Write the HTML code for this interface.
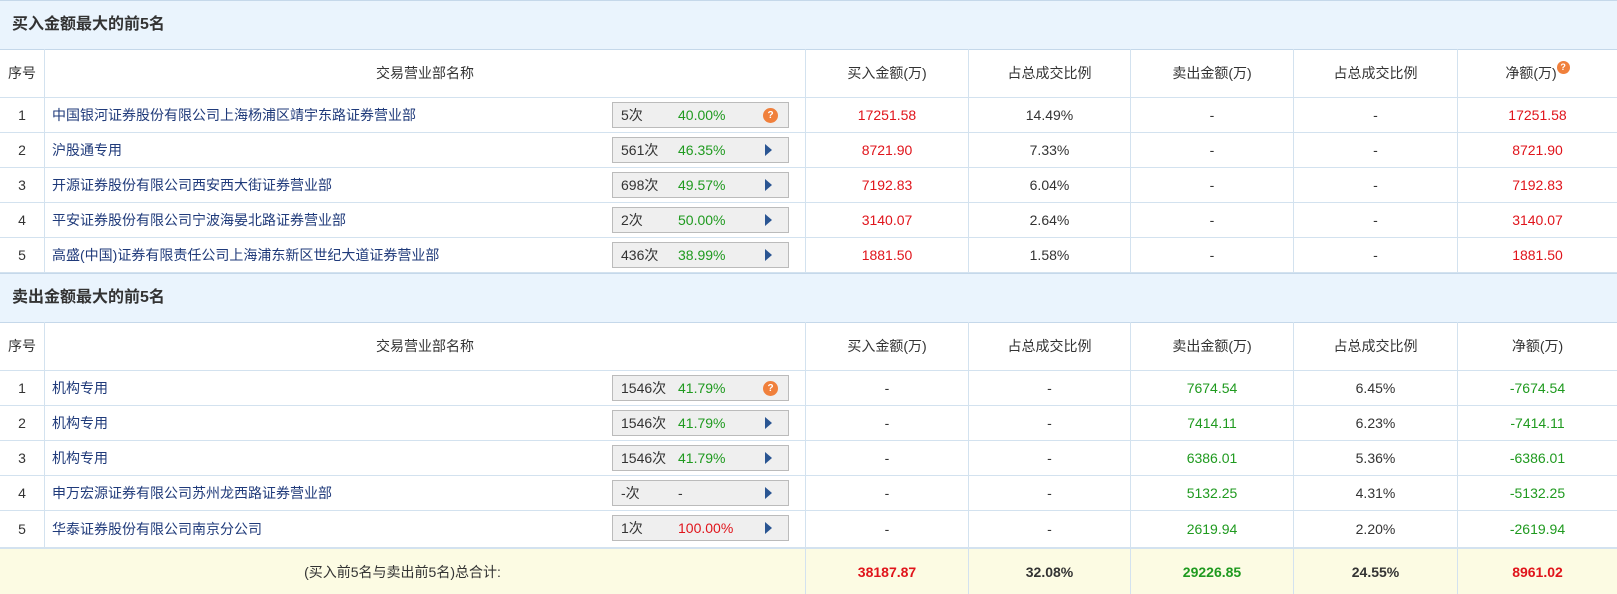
<!DOCTYPE html>
<html><head><meta charset="utf-8"><style>
*{margin:0;padding:0;box-sizing:border-box}
body{width:1617px;height:594px;background:#fff;font-family:"Liberation Sans","Noto Sans CJK SC",sans-serif;font-size:14px;color:#333;overflow:hidden;position:relative}
.t{position:absolute;left:0;width:1617px;background:#eaf4fd;border-top:1px solid #c5d8ea;border-bottom:1px solid #c5d8ea;font-size:16px;font-weight:bold;color:#333;padding-left:12px}
.row{position:absolute;left:0;width:1617px;height:35px;border-bottom:1px solid #d3e2ef}
.c{position:absolute;top:0;height:100%;display:flex;align-items:center;justify-content:center;border-left:1px solid #d3e2ef}
.hd{height:49px}
.n{justify-content:flex-start;padding-left:7px;color:#1f3a7a}
.btn{position:absolute;left:612px;top:4px;width:177px;height:26px;background:#efefef;border:1px solid #bbb;font-size:14px}
.btn .a,.btn .p{position:absolute;top:0;height:24px;line-height:24px;font-family:"Liberation Sans",sans-serif}
.btn .a{left:8px;color:#333}
.btn .a i{font-style:normal;font-family:"Noto Sans CJK SC",sans-serif;font-size:14px;line-height:24px;display:inline-block;vertical-align:top}
.btn .p{left:65px}
.btn .ar{position:absolute;left:152px;top:6px;width:0;height:0;border-top:6px solid transparent;border-bottom:6px solid transparent;border-left:7px solid #2a5592}
.btn .q{position:absolute;left:150px;top:5px;width:15px;height:15px;border-radius:50%;background:#f0803c;color:#fff;font-size:10px;text-align:center;line-height:15px;font-weight:bold}
.r{color:#e0141b}.g{color:#1f9a1f}
.tot{position:absolute;left:0;top:548px;width:1617px;height:46px;background:#fcfbe3;border-top:1px solid #d3e2ef}
.tot .c{font-weight:bold}
</style></head><body>

<div class="t" style="top:0;height:50px;line-height:48px">买入金额最大的前5名</div>
<div class="row hd" style="top:49px"><div class="c" style="left:0;width:44px;border-left:0">序号</div><div class="c" style="left:44px;width:761px">交易营业部名称</div><div class="c" style="left:805px;width:163px">买入金额(万)</div><div class="c" style="left:968px;width:162px">占总成交比例</div><div class="c" style="left:1130px;width:163px">卖出金额(万)</div><div class="c" style="left:1293px;width:164px">占总成交比例</div><div class="c" style="left:1457px;width:160px">净额(万)<span style="display:inline-block;width:13px;height:13px;border-radius:50%;background:#f0803c;color:#fff;font-size:9px;line-height:13px;text-align:center;margin-top:-12px;font-weight:bold">?</span></div></div>

<div class="row" style="top:98px"><div class="c" style="left:0;width:44px;border-left:0">1</div><div class="c n" style="left:44px;width:761px">中国银河证券股份有限公司上海杨浦区靖宇东路证券营业部</div><div class="btn"><span class="a">5<i>次</i></span><span class="p g">40.00%</span><span class="q">?</span></div><div class="c r" style="left:805px;width:163px">17251.58</div><div class="c" style="left:968px;width:162px">14.49%</div><div class="c" style="left:1130px;width:163px">-</div><div class="c" style="left:1293px;width:164px">-</div><div class="c r" style="left:1457px;width:160px">17251.58</div></div>
<div class="row" style="top:133px"><div class="c" style="left:0;width:44px;border-left:0">2</div><div class="c n" style="left:44px;width:761px">沪股通专用</div><div class="btn"><span class="a">561<i>次</i></span><span class="p g">46.35%</span><span class="ar"></span></div><div class="c r" style="left:805px;width:163px">8721.90</div><div class="c" style="left:968px;width:162px">7.33%</div><div class="c" style="left:1130px;width:163px">-</div><div class="c" style="left:1293px;width:164px">-</div><div class="c r" style="left:1457px;width:160px">8721.90</div></div>
<div class="row" style="top:168px"><div class="c" style="left:0;width:44px;border-left:0">3</div><div class="c n" style="left:44px;width:761px">开源证券股份有限公司西安西大街证券营业部</div><div class="btn"><span class="a">698<i>次</i></span><span class="p g">49.57%</span><span class="ar"></span></div><div class="c r" style="left:805px;width:163px">7192.83</div><div class="c" style="left:968px;width:162px">6.04%</div><div class="c" style="left:1130px;width:163px">-</div><div class="c" style="left:1293px;width:164px">-</div><div class="c r" style="left:1457px;width:160px">7192.83</div></div>
<div class="row" style="top:203px"><div class="c" style="left:0;width:44px;border-left:0">4</div><div class="c n" style="left:44px;width:761px">平安证券股份有限公司宁波海晏北路证券营业部</div><div class="btn"><span class="a">2<i>次</i></span><span class="p g">50.00%</span><span class="ar"></span></div><div class="c r" style="left:805px;width:163px">3140.07</div><div class="c" style="left:968px;width:162px">2.64%</div><div class="c" style="left:1130px;width:163px">-</div><div class="c" style="left:1293px;width:164px">-</div><div class="c r" style="left:1457px;width:160px">3140.07</div></div>
<div class="row" style="top:238px"><div class="c" style="left:0;width:44px;border-left:0">5</div><div class="c n" style="left:44px;width:761px">高盛(中国)证券有限责任公司上海浦东新区世纪大道证券营业部</div><div class="btn"><span class="a">436<i>次</i></span><span class="p g">38.99%</span><span class="ar"></span></div><div class="c r" style="left:805px;width:163px">1881.50</div><div class="c" style="left:968px;width:162px">1.58%</div><div class="c" style="left:1130px;width:163px">-</div><div class="c" style="left:1293px;width:164px">-</div><div class="c r" style="left:1457px;width:160px">1881.50</div></div>

<div class="t" style="top:273px;height:50px;line-height:48px">卖出金额最大的前5名</div>
<div class="row hd" style="top:322px"><div class="c" style="left:0;width:44px;border-left:0">序号</div><div class="c" style="left:44px;width:761px">交易营业部名称</div><div class="c" style="left:805px;width:163px">买入金额(万)</div><div class="c" style="left:968px;width:162px">占总成交比例</div><div class="c" style="left:1130px;width:163px">卖出金额(万)</div><div class="c" style="left:1293px;width:164px">占总成交比例</div><div class="c" style="left:1457px;width:160px">净额(万)</div></div>

<div class="row" style="top:371px"><div class="c" style="left:0;width:44px;border-left:0">1</div><div class="c n" style="left:44px;width:761px">机构专用</div><div class="btn"><span class="a">1546<i>次</i></span><span class="p g">41.79%</span><span class="q">?</span></div><div class="c" style="left:805px;width:163px">-</div><div class="c" style="left:968px;width:162px">-</div><div class="c g" style="left:1130px;width:163px">7674.54</div><div class="c" style="left:1293px;width:164px">6.45%</div><div class="c g" style="left:1457px;width:160px">-7674.54</div></div>
<div class="row" style="top:406px"><div class="c" style="left:0;width:44px;border-left:0">2</div><div class="c n" style="left:44px;width:761px">机构专用</div><div class="btn"><span class="a">1546<i>次</i></span><span class="p g">41.79%</span><span class="ar"></span></div><div class="c" style="left:805px;width:163px">-</div><div class="c" style="left:968px;width:162px">-</div><div class="c g" style="left:1130px;width:163px">7414.11</div><div class="c" style="left:1293px;width:164px">6.23%</div><div class="c g" style="left:1457px;width:160px">-7414.11</div></div>
<div class="row" style="top:441px"><div class="c" style="left:0;width:44px;border-left:0">3</div><div class="c n" style="left:44px;width:761px">机构专用</div><div class="btn"><span class="a">1546<i>次</i></span><span class="p g">41.79%</span><span class="ar"></span></div><div class="c" style="left:805px;width:163px">-</div><div class="c" style="left:968px;width:162px">-</div><div class="c g" style="left:1130px;width:163px">6386.01</div><div class="c" style="left:1293px;width:164px">5.36%</div><div class="c g" style="left:1457px;width:160px">-6386.01</div></div>
<div class="row" style="top:476px"><div class="c" style="left:0;width:44px;border-left:0">4</div><div class="c n" style="left:44px;width:761px">申万宏源证券有限公司苏州龙西路证券营业部</div><div class="btn"><span class="a">-<i>次</i></span><span class="p" style="left:65px">-</span><span class="ar"></span></div><div class="c" style="left:805px;width:163px">-</div><div class="c" style="left:968px;width:162px">-</div><div class="c g" style="left:1130px;width:163px">5132.25</div><div class="c" style="left:1293px;width:164px">4.31%</div><div class="c g" style="left:1457px;width:160px">-5132.25</div></div>
<div class="row" style="top:511px;height:37px"><div class="c" style="left:0;width:44px;border-left:0">5</div><div class="c n" style="left:44px;width:761px">华泰证券股份有限公司南京分公司</div><div class="btn"><span class="a">1<i>次</i></span><span class="p r">100.00%</span><span class="ar"></span></div><div class="c" style="left:805px;width:163px">-</div><div class="c" style="left:968px;width:162px">-</div><div class="c g" style="left:1130px;width:163px">2619.94</div><div class="c" style="left:1293px;width:164px">2.20%</div><div class="c g" style="left:1457px;width:160px">-2619.94</div></div>

<div class="tot"><div class="c" style="left:0;width:805px;border-left:0;font-weight:normal">(买入前5名与卖出前5名)总合计:</div><div class="c r" style="left:805px;width:163px">38187.87</div><div class="c" style="left:968px;width:162px">32.08%</div><div class="c g" style="left:1130px;width:163px">29226.85</div><div class="c" style="left:1293px;width:164px">24.55%</div><div class="c r" style="left:1457px;width:160px">8961.02</div></div>
</body></html>
